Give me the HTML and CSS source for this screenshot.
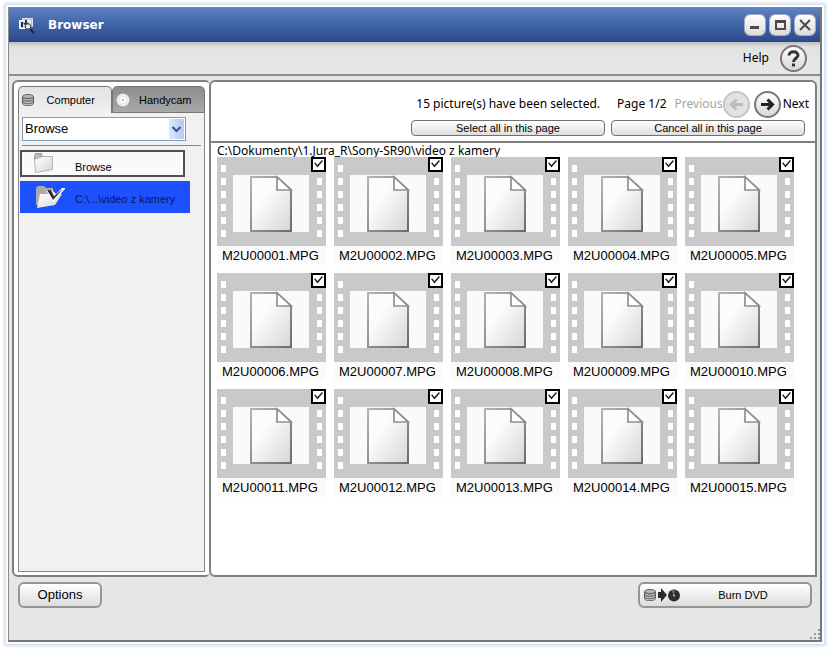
FILE: index.html
```
<!DOCTYPE html>
<html lang="en">
<head>
<meta charset="utf-8">
<title>Browser</title>
<link rel="stylesheet" href="styles.css">
</head>
<body>
<svg class="defs" aria-hidden="true">
  <defs>
    <linearGradient id="paper" x1="0" y1="0" x2="1" y2="1"><stop offset="0.35" stop-color="#fcfcfc"/><stop offset="1" stop-color="#d6d6d6"/></linearGradient>
    <linearGradient id="edge" x1="0" y1="0" x2="1" y2="1"><stop offset="0" stop-color="#b4b4b4"/><stop offset="1" stop-color="#6c6c6c"/></linearGradient>
    <linearGradient id="folder" x1="0" y1="0" x2="1" y2="1"><stop offset="0" stop-color="#fff"/><stop offset="1" stop-color="#d4d4d4"/></linearGradient>
    <symbol id="film" viewBox="0 0 109 89">
      <path fill="#c9c9c9" d="M0 0h109v89H0z"/>
      <path fill="#fafafa" d="M16 18h76v57H16z"/>
      <path fill="none" stroke="#fff" stroke-width="5" stroke-dasharray="7 6" d="M6.500 8v73M102.500 8v73"/>
      <path fill="url(#paper)" stroke="url(#edge)" stroke-width="2" d="M34 20H60L74 33V74H34z"/>
      <path fill="#fff" stroke="#909090" stroke-width="1.700" d="M60 20V33H74z"/>
    </symbol>
    <symbol id="disks" viewBox="0 0 12 12">
      <path fill="#777" stroke="#5c5c5c" d="M.5 2.500v7c0 2.700 11 2.700 11 0v-7z"/>
      <ellipse cx="6" cy="2.500" rx="5.500" ry="2" fill="#b5b5b5" stroke="#666"/>
      <path fill="none" stroke="#d0d0d0" d="M1 4.500c1 2 9 2 10 0M1 7c1 2 9 2 10 0M1 9.300c1 2 9 2 10 0"/>
    </symbol>
  </defs>
</svg>
<div class="window">
  <header class="titlebar">
    <svg class="app-icon" viewBox="0 0 17 17" aria-hidden="true">
      <path fill="#9fc4d8" stroke="#dfe9ee" d="M4.500 1.500h10v8h-10z"/>
      <path fill="#c6dfe4" stroke="#fff" d="M1.500 3.500h11v8h-11z"/>
      <path fill="#273244" d="M3 5h2v5H3zM7 3h2v3h2L8 9 5 6h2z"/>
      <circle cx="10" cy="9.500" r="2.800" fill="#d2eff5" stroke="#293645"/>
      <path stroke="#1c2638" stroke-width="2" d="M12 12l4 4"/>
    </svg>
    <h1>Browser</h1>
    <div class="window-buttons">
      <button type="button" aria-label="Minimize"><svg viewBox="0 0 20 20"><path fill="#4b4b4b" d="M5 11h9v3H5z"/></svg></button>
      <button type="button" aria-label="Maximize"><svg viewBox="0 0 20 20"><path fill="#4b4b4b" fill-rule="evenodd" d="M5 5h11v10H5zM7 8v5h7V8z"/></svg></button>
      <button type="button" aria-label="Close"><svg viewBox="0 0 20 20"><path fill="none" stroke="#4b4b4b" stroke-width="2" d="M5 5l10 10M15 5L5 15"/></svg></button>
    </div>
  </header>
  <div class="toolbar">
    <label for="help">Help</label>
    <button class="round" id="help" type="button"><svg viewBox="0 0 27 27"><path fill="none" stroke="#333" stroke-width="3" d="M9 10.500C9 5.500 18 5.500 18 10.300c0 3-4.500 3-4.500 6.700"/><path fill="#333" d="M12 18.500h3v3h-3z"/></svg></button>
  </div>
  <main class="panels">
    <aside class="sidebar">
      <div class="tabs" role="tablist">
        <button class="tab active" role="tab" aria-selected="true" type="button"><svg class="disks" aria-hidden="true"><use href="#disks"/></svg><span>Computer</span></button>
        <button class="tab" role="tab" aria-selected="false" type="button"><svg class="disc" viewBox="0 0 14 14" aria-hidden="true"><circle cx="7" cy="7" r="6.500" fill="#ececec"/><circle cx="7" cy="7" r="3" fill="#fafafa"/><circle cx="7" cy="7" r="1" fill="#aaa"/></svg><span>Handycam</span></button>
      </div>
      <div class="side-body">
        <div class="picker">
          <select aria-label="Source"><option>Browse</option></select>
          <svg viewBox="0 0 15 20" aria-hidden="true"><path fill="none" stroke="#3f5583" stroke-width="2.200" d="M3.500 8l4 4 4-4"/></svg>
        </div>
        <hr>
        <button class="folder" type="button">
          <svg viewBox="0 0 30 26" aria-hidden="true"><path fill="#b9b9b9" stroke="#999" d="M1.500 5.500l1-3h6l1 3v4h-8z"/><path fill="url(#folder)" stroke="#b4b4b4" d="M1.500 8.500l8-3H19.500v13L2.500 21.500z"/></svg>
          <span>Browse</span>
        </button>
        <button class="folder selected" type="button">
          <svg viewBox="0 0 30 26" aria-hidden="true"><path fill="#aaa" d="M1 4l2-2h6l2 2h7v17H1z"/><path fill="url(#folder)" d="M5 10h22l-7 11-18 3z"/><path fill="#fff" d="M11 6h6l4 4 6-6h4L18 18z"/><path fill="#333" d="M12 6h4l3 6 9-7-10 11z"/></svg>
          <span>C:\...\video z kamery</span>
        </button>
      </div>
    </aside>
    <section class="content">
      <div class="controls">
        <div class="paging">
          <span class="status">15 picture(s) have been selected.</span>
          <span class="page">Page 1/2</span>
          <label class="off" for="prev">Previous</label>
          <button class="round off" id="prev" type="button" disabled><svg viewBox="0 0 27 27"><path fill="none" stroke="currentColor" stroke-width="3" d="M20 13.500H9M13.500 8.500l-5 5 5 5"/></svg></button>
          <button class="round next" id="next" type="button"><svg viewBox="0 0 27 27"><path fill="none" stroke="currentColor" stroke-width="3" d="M7 13.500h11M13.500 8.500l5 5-5 5"/></svg></button>
          <label for="next">Next</label>
        </div>
        <div class="bulk">
          <button type="button">Select all in this page</button>
          <button type="button">Cancel all in this page</button>
        </div>
      </div>
      <p class="path">C:\Dokumenty\1.Jura_R\Sony-SR90\video z kamery</p>
      <ul class="clips">
        <li><svg><use href="#film"/></svg><input type="checkbox" id="c1" checked><label for="c1">M2U00001.MPG</label></li>
        <li><svg><use href="#film"/></svg><input type="checkbox" id="c2" checked><label for="c2">M2U00002.MPG</label></li>
        <li><svg><use href="#film"/></svg><input type="checkbox" id="c3" checked><label for="c3">M2U00003.MPG</label></li>
        <li><svg><use href="#film"/></svg><input type="checkbox" id="c4" checked><label for="c4">M2U00004.MPG</label></li>
        <li><svg><use href="#film"/></svg><input type="checkbox" id="c5" checked><label for="c5">M2U00005.MPG</label></li>
        <li><svg><use href="#film"/></svg><input type="checkbox" id="c6" checked><label for="c6">M2U00006.MPG</label></li>
        <li><svg><use href="#film"/></svg><input type="checkbox" id="c7" checked><label for="c7">M2U00007.MPG</label></li>
        <li><svg><use href="#film"/></svg><input type="checkbox" id="c8" checked><label for="c8">M2U00008.MPG</label></li>
        <li><svg><use href="#film"/></svg><input type="checkbox" id="c9" checked><label for="c9">M2U00009.MPG</label></li>
        <li><svg><use href="#film"/></svg><input type="checkbox" id="c10" checked><label for="c10">M2U00010.MPG</label></li>
        <li><svg><use href="#film"/></svg><input type="checkbox" id="c11" checked><label for="c11">M2U00011.MPG</label></li>
        <li><svg><use href="#film"/></svg><input type="checkbox" id="c12" checked><label for="c12">M2U00012.MPG</label></li>
        <li><svg><use href="#film"/></svg><input type="checkbox" id="c13" checked><label for="c13">M2U00013.MPG</label></li>
        <li><svg><use href="#film"/></svg><input type="checkbox" id="c14" checked><label for="c14">M2U00014.MPG</label></li>
        <li><svg><use href="#film"/></svg><input type="checkbox" id="c15" checked><label for="c15">M2U00015.MPG</label></li>
      </ul>
    </section>
  </main>
  <footer class="footer">
    <button class="options" type="button">Options</button>
    <button class="burn" type="button">
      <svg viewBox="0 0 36 14" aria-hidden="true"><use href="#disks" x="0" y="1" width="12" height="12"/><path fill="#2b2b2b" d="M14 4h3V0l6 7-6 7v-4h-3z"/><circle cx="30" cy="7.500" r="6" fill="#2e2e2e"/><path fill="#666" d="M30 7.500l-3-5a6 6 0 0 1 4-1z"/><circle cx="30" cy="7.500" r="1" fill="#ccc"/></svg>
      <span>Burn DVD</span>
    </button>
  </footer>
  <svg class="grip" viewBox="0 0 12 12" aria-hidden="true"><path fill="#999" d="M9 0h2v2H9zM5 4h2v2H5zM9 4h2v2H9zM1 8h2v2H1zM5 8h2v2H5zM9 8h2v2H9z"/></svg>
</div>
</body>
</html>
```
FILE: styles.css
```
* { box-sizing: border-box; }

body {
  margin: 0;
  min-height: 100vh;
  padding: 7px 8px;
  display: flex;
  background: #fff;
  font: 12px/16px "Noto Sans", sans-serif;
  color: #000;
}

button, select, input { margin: 0; padding: 0; font: inherit; color: inherit; }
svg { display: block; flex: none; }
.defs { position: absolute; width: 0; height: 0; }

.window {
  position: relative;
  flex: 1;
  display: flex;
  flex-direction: column;
  border: 1px solid #8a8a8a;
  border-right: 2px solid #777;
  border-bottom: 2px solid #777;
  background: #e6e6e6;
  box-shadow: 0 0 0 2px #fff, 0 0 3px 4px #cddcee;
}

.titlebar {
  display: flex;
  align-items: center;
  height: 34px;
  padding: 0 5px 0 9px;
  background: linear-gradient(#5f82c2, #4468ae 40%, #2d4889);
}
.titlebar h1 { flex: 1; margin: 0; font: bold 12px/16px "DejaVu Sans", sans-serif; color: #fff; }
.app-icon { width: 17px; height: 17px; margin-right: 13px; }
.window-buttons { display: flex; gap: 5px; }
.window-buttons button {
  width: 20px;
  height: 20px;
  border: 0;
  border-radius: 5px;
  background: linear-gradient(#fff, #dcdcdc);
  box-shadow: 0 0 0 1px #a3adbf;
}

.toolbar {
  display: flex;
  align-items: center;
  justify-content: flex-end;
  gap: 11px;
  height: 34px;
  padding-right: 13px;
  border-bottom: 2px solid #8f8f8f;
  background: linear-gradient(#bebebe, #e2e2e2 5px, #e8e8e8);
}

.round {
  width: 27px;
  height: 27px;
  border: 2px solid #777;
  border-radius: 50%;
  background: linear-gradient(#fff, #d8d8d8);
  color: #222;
}
.round svg { margin: -2px; width: 27px; height: 27px; }
.round.off { border-color: #c4c4c4; background: #e2e2e2; color: #bbb; }
.off { color: #aaa397; }

.panels { flex: 1; display: flex; margin: 4px 3px 0 3px; }

.sidebar {
  display: flex;
  flex-direction: column;
  width: 197px;
  padding: 4px 4px 3px 4px;
  border: 2px solid #808080;
  border-right: 0;
  border-radius: 6px 4px 4px 6px;
  background: #fff;
}
.tabs { display: flex; font: 11px/14px "Liberation Sans", sans-serif; }
.tab {
  flex: 1;
  display: flex;
  align-items: center;
  height: 27px;
  padding: 0 3px;
  border: 1px solid #777;
  border-radius: 5px 5px 0 0;
  background: linear-gradient(#8c8c8c, #a9a9a9);
}
.tab span { flex: 1; }
.tab.active { border-bottom: 0; background: linear-gradient(#e2e2e2, #f1f1f1); }
.disks { width: 12px; height: 12px; }
.disc { width: 14px; height: 14px; }

.side-body {
  flex: 1;
  padding: 4px 3px;
  border: 1px solid #888;
  border-top: 0;
  background: #f1f1f1;
}
.picker { position: relative; width: 164px; }
.picker select {
  display: block;
  appearance: none;
  width: 100%;
  height: 24px;
  padding: 0 2px;
  border: 1px solid #7f9db9;
  border-radius: 0;
  background: #fff;
  font: 13px/18px "Liberation Sans", sans-serif;
}
.picker svg {
  position: absolute;
  top: 2px;
  right: 2px;
  width: 15px;
  height: 20px;
  background: linear-gradient(90deg, #dce8ff, #b3c9f7);
  pointer-events: none;
}
hr { height: 1px; margin: 4px 0; border: 0; background: #888; }
.folder {
  display: flex;
  align-items: center;
  width: 165px;
  height: 27px;
  margin-left: -2px;
  padding-left: 11px;
  border: 2px solid #505050;
  background: #fafafa;
  font: 11px/14px "Liberation Sans", sans-serif;
}
.folder svg { width: 30px; height: 26px; }
.folder span { margin-left: 12px; padding-top: 6px; white-space: nowrap; }
.folder.selected {
  width: 170px;
  height: 32px;
  margin-top: 4px;
  padding-left: 15px;
  border: 0;
  background: #1d50ff;
  color: #10184c;
}
.folder.selected span { margin-left: 10px; padding-top: 4px; }

.content {
  flex: 1;
  min-width: 0;
  border: 2px solid #808080;
  border-radius: 6px 6px 0 6px;
  background: #fff;
}
.controls { padding: 6px 10px 5px; border-bottom: 2px solid #808080; }
.paging { display: flex; align-items: center; justify-content: flex-end; height: 32px; margin-right: -4px; }
.page { margin: 0 8px 0 17px; }
.next { margin: 0 2px 0 4px; }
.bulk { display: flex; justify-content: flex-end; gap: 6px; }
.bulk button {
  flex: 0 1 194px;
  height: 16px;
  border: 1px solid #707070;
  border-radius: 4px;
  background: linear-gradient(#fff, #dedede);
  font: 11px/14px "Liberation Sans", sans-serif;
}

.path { height: 14px; margin: 0 6px; line-height: 16px; }
.clips {
  display: grid;
  grid-template-columns: repeat(auto-fill, 109px);
  gap: 8px;
  margin: 0 6px;
  padding: 0;
  list-style: none;
}
.clips li { position: relative; height: 108px; background: #fafafa; }
.clips svg { width: 109px; height: 89px; }
.clips label { display: block; padding: 1px 0 0 5px; font: 13px/18px "Liberation Sans", sans-serif; }
.clips input {
  position: absolute;
  top: 0;
  right: 0;
  width: 15px;
  height: 15px;
  appearance: none;
  border: 2px solid #000;
  background: #fff;
}
.clips input:checked::before {
  content: "";
  display: block;
  width: 9px;
  height: 8px;
  margin: 1px;
  background: #222;
  clip-path: polygon(0 38%, 15% 30%, 38% 62%, 88% 0, 100% 12%, 38% 95%);
}

.footer { display: flex; justify-content: space-between; align-items: flex-start; height: 63px; padding: 5px 8px 0 9px; }
.footer button {
  height: 26px;
  border: 2px solid #959595;
  border-radius: 6px;
  background: linear-gradient(#fff, #dcdcdc);
}
.footer .options { width: 84px; font: 13px/18px "Liberation Sans", sans-serif; }
.footer .burn { display: flex; align-items: center; width: 174px; padding: 0 4px; font: 11px/14px "Liberation Sans", sans-serif; }
.burn svg { width: 36px; height: 14px; }
.burn span { flex: 1; }
.grip { position: absolute; right: -1px; bottom: -1px; width: 12px; height: 12px; }
```
